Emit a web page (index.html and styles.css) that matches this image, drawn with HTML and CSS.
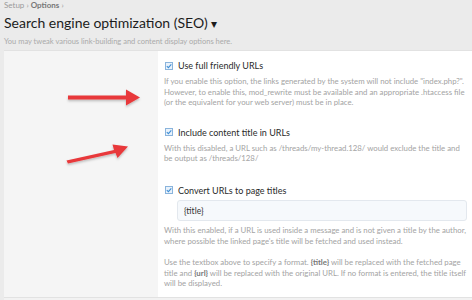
FILE: index.html
```html
<!DOCTYPE html>
<html lang="en">
<head>
    <meta charset="UTF-8">
    <title>Search engine optimization (SEO)</title>
    <link rel="stylesheet" href="styles.css">
</head>
<body>
    <div class="page-header">
        <div class="breadcrumb">Setup <span class="sep">&rsaquo;</span> <b>Options</b> <span class="sep">&rsaquo;</span></div>
        <h1 class="page-title">Search engine optimization (SEO) <span class="caret">&#9662;</span></h1>
        <p class="page-desc">You may tweak various link-building and content display options here.</p>
    </div>

    <div class="block">
        <div class="block-labels">
            <svg class="arrows" width="160" height="240" viewBox="0 0 160 240">
                <defs>
                    <filter id="shadow" x="-20%" y="-50%" width="140%" height="200%">
                        <feDropShadow dx="0" dy="1.5" stdDeviation="1.2" flood-color="#000" flood-opacity="0.25"/>
                    </filter>
                </defs>
                <g fill="#e8383a" filter="url(#shadow)">
                    <path d="M68 44.5 L126 44.5 L126 38.5 L140 46.5 L126 54.5 L126 48.5 L68 48.5 Z"/>
                    <path d="M66.5 109.5 L114 99 L112.5 93.5 L128 95.5 L117.5 107 L115.5 102 L68 112.5 Z"/>
                </g>
            </svg>
        </div>
        <div class="block-body">
            <div class="option">
                <label class="check-row">
                    <span class="checkbox"><svg width="8" height="8" viewBox="0 0 8 8"><path d="M1.8 4.1 L3.4 5.6 L6.3 2.4" fill="none" stroke="#3f8fd6" stroke-width="1.1"/></svg></span>
                    Use full friendly URLs
                </label>
                <p class="explain">If you enable this option, the links generated by the system will not include "index.php?". However, to enable this, mod_rewrite must be available and an appropriate .htaccess file (or the equivalent for your web server) must be in place.</p>
            </div>

            <div class="option">
                <label class="check-row">
                    <span class="checkbox"><svg width="8" height="8" viewBox="0 0 8 8"><path d="M1.8 4.1 L3.4 5.6 L6.3 2.4" fill="none" stroke="#3f8fd6" stroke-width="1.1"/></svg></span>
                    Include content title in URLs
                </label>
                <p class="explain">With this disabled, a URL such as /threads/my-thread.128/ would exclude the title and be output as /threads/128/</p>
            </div>

            <div class="option">
                <label class="check-row">
                    <span class="checkbox"><svg width="8" height="8" viewBox="0 0 8 8"><path d="M1.8 4.1 L3.4 5.6 L6.3 2.4" fill="none" stroke="#3f8fd6" stroke-width="1.1"/></svg></span>
                    Convert URLs to page titles
                </label>
                <div class="input-wrap">
                    <input type="text" class="text-input" value="{title}">
                </div>
                <p class="explain">With this enabled, if a URL is used inside a message and is not given a title by the author, where possible the linked page's title will be fetched and used instead.</p>
                <p class="explain gap">Use the textbox above to specify a format. <b>{title}</b> will be replaced with the fetched page title and <b>{url}</b> will be replaced with the original URL. If no format is entered, the title itself will be displayed.</p>
            </div>
        </div>
    </div>
    <div class="block-footer"></div>
</body>
</html>
```

FILE: styles.css
```css
* {
    margin: 0;
    padding: 0;
    box-sizing: border-box;
}

body {
    background-color: #ebebeb;
    font-family: Lato, 'Noto Sans', sans-serif;
    color: #222;
    overflow: hidden;
}

.page-header {
    padding: 0 4px;
}

.breadcrumb {
    font-size: 8px;
    color: #9a9a9a;
    line-height: 10px;
}

.breadcrumb b {
    color: #777;
}

.page-title {
    font-size: 14px;
    font-weight: normal;
    color: #1c1c1c;
    line-height: 22px;
    margin-top: 2px;
}

.caret {
    font-size: 12px;
}

.page-desc {
    font-size: 7.5px;
    color: #aaa;
    line-height: 12px;
    margin-top: 1px;
}

.block {
    display: grid;
    grid-template-columns: 154px 1fr;
    margin: 2px 0 0 4px;
    border-top: 1px solid #e2e2e2;
}

.block-labels {
    background-color: #f5f5f5;
    position: relative;
}

.arrows {
    position: absolute;
    left: -4px;
    top: 0;
}

.block-body {
    background-color: #fff;
    padding: 8px 5px 8px 6px;
}

.option {
    margin-bottom: 18px;
}

.option:nth-child(2) {
    margin-bottom: 20px;
}

.option:last-child {
    margin-bottom: 0;
}

.check-row {
    display: flex;
    align-items: center;
    font-size: 9px;
    color: #2a2a2a;
    line-height: 13px;
}

.checkbox {
    width: 8px;
    height: 8px;
    border: 1px solid #8ab4dc;
    background-color: #e9f2fb;
    margin: 0 5px 0 1px;
    display: flex;
    align-items: center;
    justify-content: center;
}

.checkbox svg {
    display: block;
    flex: none;
}

.explain {
    font-size: 7.8px;
    color: #a3a3a3;
    line-height: 10.5px;
    margin-top: 4px;
}

.explain b {
    color: #777;
}

.explain.gap {
    margin-top: 11px;
}

.input-wrap {
    padding-left: 13px;
    margin-top: 1px;
}

.text-input {
    width: 100%;
    height: 21px;
    border: 1px solid #e3e8ee;
    border-radius: 3px;
    background-color: #f6f9fc;
    font-family: Lato, 'Noto Sans', sans-serif;
    font-size: 8.5px;
    color: #333;
    padding: 0 6px;
}

.block-footer {
    margin-left: 4px;
    height: 3px;
    border-top: 1px solid #e2e2e2;
    background-color: #f2f2f2;
}
```
